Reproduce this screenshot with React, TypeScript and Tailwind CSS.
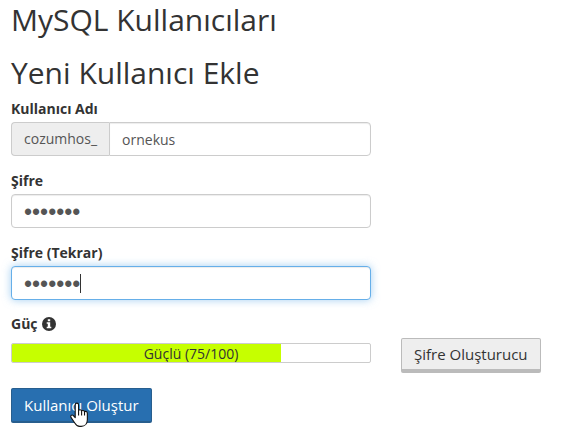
import type { InputHTMLAttributes } from "react";

const inputBase =
  "block h-[34px] w-full min-w-0 border bg-white px-3 text-[#555] outline-none";

function PasswordField({
  label,
  active = false,
  ...rest
}: { label: string; active?: boolean } & InputHTMLAttributes<HTMLInputElement>) {
  const state = active
    ? "border-[#66afe9] shadow-[inset_0_1px_1px_rgba(0,0,0,0.075),0_0_8px_rgba(102,175,233,0.6)]"
    : "border-[#ccc] shadow-[inset_0_1px_1px_rgba(0,0,0,0.075)]";
  return (
    <div className="flex flex-col gap-1">
      <label htmlFor={rest.id} className="text-sm leading-[18px] font-bold">
        {label}
      </label>
      <div className="relative">
        <input
          type="password"
          className={`${inputBase} rounded pt-0.5 font-['Liberation_Sans',sans-serif] text-[23px] ${state}`}
          {...rest}
        />
        {active && <span className="absolute top-2 left-[69px] h-[19px] w-px bg-[#333]" />}
      </div>
    </div>
  );
}

function InfoIcon() {
  return (
    <svg viewBox="0 0 14 14" className="size-3.5" aria-hidden="true">
      <circle cx="7" cy="7" r="7" fill="#333" />
      <path d="M5.8 2.2h2.4v2H5.8zM4.7 5.3h3.5v4.4h1.1v1.5H4.7V9.7h1.1V6.8H4.7z" fill="#fff" />
    </svg>
  );
}

function HandCursor() {
  return (
    <svg
      viewBox="0 0 18 24"
      className="pointer-events-none absolute top-3.5 left-[58px] h-[26px] w-5"
      aria-hidden="true"
    >
      <path
        d="M5.5 14.5V2.8C5.5.4 8.6.4 8.6 2.8v5c.6-1 2.5-.8 2.8.5.7-.8 2.4-.5 2.7.7.9-.7 2.6-.2 2.6 1.5v5.8c0 3.6-2.2 6.2-5.7 6.2H9.6c-2.2 0-3.4-1.2-4.5-3.1l-3.5-5.2c-.9-1.4.7-2.8 2-1.8z"
        fill="#fff"
        stroke="#111"
        strokeWidth="1"
        strokeLinejoin="round"
      />
      <path d="M8.6 7.8v4.7M11.4 8.3v4.2M14.1 9v3.5" stroke="#111" strokeWidth="1" />
    </svg>
  );
}

export default function App() {
  const strength = 75;
  return (
    <main className="bg-white px-[11px] pt-[3px] pb-5 font-['Open_Sans','Noto_Sans',sans-serif] text-[#333]">
      <h1 className="text-[30px] leading-[33px]">MySQL Kullanıcıları</h1>
      <h2 className="mt-5 text-[30px] leading-[33px]">Yeni Kullanıcı Ekle</h2>

      <form className="mt-[11px] flex flex-col gap-[15px]" onSubmit={(e) => e.preventDefault()}>
        <div className="flex max-w-[360px] flex-col gap-4">
          <div className="flex flex-col gap-1">
            <label htmlFor="user" className="text-sm leading-[18px] font-bold">
              Kullanıcı Adı
            </label>
            <div className="flex">
              <span className="flex h-[34px] items-center rounded-l border border-r-0 border-[#ccc] bg-[#eee] px-3 text-sm text-[#555]">
                cozumhos_
              </span>
              <input
                id="user"
                type="text"
                defaultValue="ornekus"
                className={`${inputBase} flex-1 rounded-r border-[#ccc] text-sm shadow-[inset_0_1px_1px_rgba(0,0,0,0.075)]`}
              />
            </div>
          </div>
          <PasswordField id="password" label="Şifre" defaultValue="ornek12" />
          <PasswordField id="password2" label="Şifre (Tekrar)" defaultValue="ornek12" active />
        </div>

        <div className="flex flex-col gap-[5px]">
          <div className="flex items-center gap-1 text-sm leading-[18px] font-bold">
            <span id="strength-label">Güç</span>
            <InfoIcon />
          </div>
          <div className="flex items-start gap-[30px]">
            <div
              role="meter"
              aria-labelledby="strength-label"
              aria-valuemin={0}
              aria-valuemax={100}
              aria-valuenow={strength}
              className="relative mt-[5px] h-5 min-w-0 max-w-[360px] flex-1 overflow-hidden rounded-xs border border-[#ccc] bg-white"
            >
              <div className="h-full bg-[#c6ff00]" style={{ width: `${strength}%` }} />
              <span className="absolute inset-0 text-center text-sm leading-5">
                Güçlü ({strength}/100)
              </span>
            </div>
            <button
              type="button"
              className="h-[35px] shrink-0 rounded-xs border border-b-4 border-[#bbb] bg-[#eee] px-3 text-[15px]"
            >
              Şifre Oluşturucu
            </button>
          </div>
        </div>

        <div className="relative self-start">
          <button
            type="submit"
            className="h-[35px] rounded-xs border border-b-2 border-[#285e8e] bg-[#286fb0] px-3 text-[15px] text-white"
          >
            Kullanıcı Oluştur
          </button>
          <HandCursor />
        </div>
      </form>
    </main>
  );
}
